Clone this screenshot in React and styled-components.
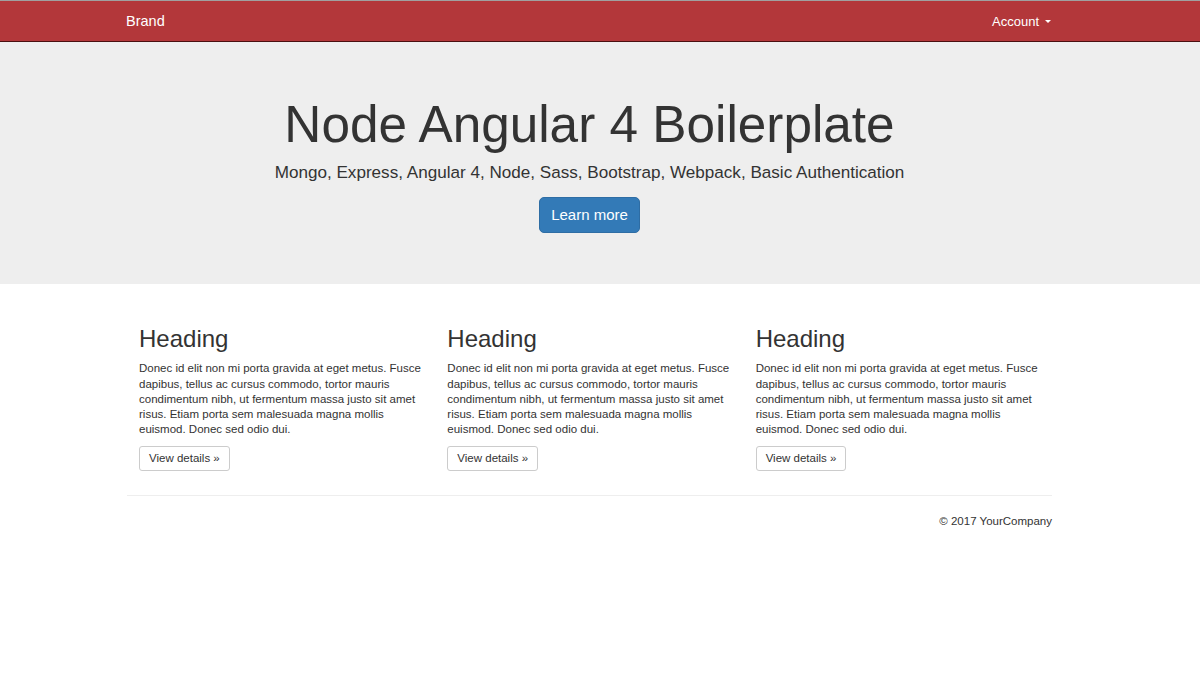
import React from "react"
import styled, { createGlobalStyle } from "styled-components"

const GlobalStyle = createGlobalStyle`
  html, body {
    margin: 0;
    padding: 0;
    background: #fff;
  }
  body {
    font-family: "Liberation Sans", Arial, sans-serif;
    font-size: 12px;
    color: #333;
  }
  * {
    box-sizing: border-box;
  }
`

const Navbar = styled.nav`
  height: 42px;
  background-color: #b3373a;
  border-top: 1px solid #a0a0a0;
  border-bottom: 1px solid #4a0f10;
`

const Container = styled.div`
  width: 925px;
  margin-left: calc(50% - 473px);
`

const NavInner = styled(Container)`
  display: flex;
  align-items: center;
  justify-content: space-between;
  height: 100%;
`

const NavLink = styled.a`
  color: #fff;
  font-size: ${props => (props.$brand ? "14.5px" : "13px")};
  text-decoration: none;
  display: flex;
  align-items: center;
  margin-left: ${props => (props.$brand ? "-1px" : "0")};
  margin-right: ${props => (props.$brand ? "0" : "1px")};
`

const Caret = styled.span`
  display: inline-block;
  width: 0;
  height: 0;
  margin-left: 6px;
  margin-top: 1px;
  border-top: 3px solid #fff;
  border-left: 3px solid transparent;
  border-right: 3px solid transparent;
`

const Jumbotron = styled.header`
  background-color: #eee;
  height: 242px;
  padding-top: 55px;
`

const HeroInner = styled(Container)`
  text-align: center;
`

const Title = styled.h1`
  margin: 0;
  font-size: 51.3px;
  font-weight: 400;
  line-height: 1.1;
  color: #333;
`

const Lead = styled.p`
  margin: 10px 0 13px;
  font-size: 17.1px;
  line-height: 1.2;
`

const PrimaryButton = styled.a`
  display: inline-block;
  padding: 8px 11.5px;
  font-size: 15px;
  line-height: 18px;
  color: #fff;
  background-color: #337ab7;
  border: 1px solid #2e6da4;
  border-radius: 5px;
  text-decoration: none;
`

const Row = styled(Container)`
  display: grid;
  grid-template-columns: repeat(3, 1fr);
  padding-top: 42px;
`

const Column = styled.div`
  padding: 0 12px;
`

const Heading = styled.h2`
  margin: 0 0 9px;
  font-size: 24px;
  font-weight: 400;
  line-height: 1.1;
`

const Text = styled.p`
  margin: 0 0 9px;
  font-size: 11.5px;
  line-height: 15.2px;
`

const DefaultButton = styled.a`
  display: inline-block;
  padding: 4px 9px;
  font-size: 11.5px;
  line-height: 15px;
  color: #333;
  background: #fff;
  border: 1px solid #ccc;
  border-radius: 3px;
  text-decoration: none;
`

const Footer = styled(Container)`
  margin-top: 24px;
  border-top: 1px solid #eee;
  padding-top: 18px;
  text-align: right;
  font-size: 11.5px;
  line-height: 15px;
`

const columns = [1, 2, 3]

export default function App() {
  return (
    <>
      <GlobalStyle />
      <Navbar>
        <NavInner>
          <NavLink href="#" $brand>Brand</NavLink>
          <NavLink href="#">Account<Caret /></NavLink>
        </NavInner>
      </Navbar>
      <Jumbotron>
        <HeroInner>
          <Title>Node Angular 4 Boilerplate</Title>
          <Lead>Mongo, Express, Angular 4, Node, Sass, Bootstrap, Webpack, Basic Authentication</Lead>
          <PrimaryButton href="#">Learn more</PrimaryButton>
        </HeroInner>
      </Jumbotron>
      <Row>
        {columns.map(n => (
          <Column key={n}>
            <Heading>Heading</Heading>
            <Text>
              Donec id elit non mi porta gravida at eget metus. Fusce dapibus, tellus ac cursus commodo, tortor mauris condimentum nibh, ut fermentum massa justo sit amet risus. Etiam porta sem malesuada magna mollis euismod. Donec sed odio dui.
            </Text>
            <DefaultButton href="#">View details »</DefaultButton>
          </Column>
        ))}
      </Row>
      <Footer>© 2017 YourCompany</Footer>
    </>
  )
}
